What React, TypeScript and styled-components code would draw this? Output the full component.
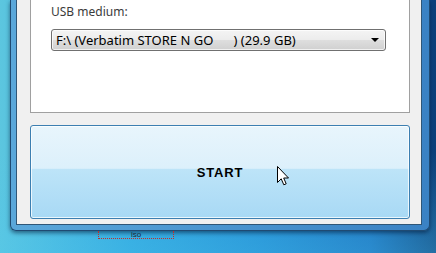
import React from 'react';
import styled, { createGlobalStyle } from 'styled-components';

const GlobalStyle = createGlobalStyle`
  html, body {
    margin: 0;
    padding: 0;
    overflow: hidden;
  }
  * {
    box-sizing: border-box;
  }
`;

const Desktop = styled.div`
  position: relative;
  width: 436px;
  height: 253px;
  overflow: hidden;
  padding-left: 10px;
  display: flex;
  flex-direction: column;
  background:
    linear-gradient(180deg, rgba(255, 255, 255, 0) 60%, rgba(80, 200, 240, 0.35) 100%),
    linear-gradient(90deg, #5cc6df 0%, #2fa6de 30%, #1f8ad2 60%, #176cbc 85%, #0c3f7a 100%);
  font-family: "Segoe UI", "Noto Sans", "Liberation Sans", sans-serif;
`;

const Window = styled.div`
  width: 420px;
  height: 231px;
  flex: none;
  display: flex;
  padding: 0 7px 5px 5px;
  background: linear-gradient(90deg, #5aa7da 0%, #4a94cf 50%, #3a82c4 100%);
  border: 1px solid #1f4a72;
  border-top: none;
  border-radius: 0 0 6px 6px;
  box-shadow: 0 2px 4px rgba(0, 20, 50, 0.55);
`;

const Client = styled.div`
  flex: 1;
  display: flex;
  flex-direction: column;
  background: #f0f0f0;
  border: 1px solid #2f5677;
  border-top: none;
  padding: 0 11px 5px 13px;
`;

const Panel = styled.div`
  height: 113px;
  background: #ffffff;
  border: 1px solid #a0a0a0;
  border-top: none;
  padding: 4px 23px 0 20px;
  display: flex;
  flex-direction: column;
`;

const Label = styled.div`
  font-size: 12px;
  line-height: 16px;
  color: #3b3b3b;
`;

const Combo = styled.div`
  margin-top: 9px;
  height: 22px;
  display: flex;
  align-items: center;
  padding: 0 6px 0 4px;
  border: 1px solid #707070;
  border-radius: 3px;
  background: linear-gradient(180deg, #f4f4f4 0%, #ececec 48%, #dedede 52%, #d0d0d0 100%);
  box-shadow: inset 0 0 0 1px rgba(255, 255, 255, 0.7);
`;

const ComboText = styled.span`
  flex: 1;
  font-size: 13px;
  color: #000;
  white-space: pre;
`;

const Arrow = styled.span`
  width: 0;
  height: 0;
  border-left: 4px solid transparent;
  border-right: 4px solid transparent;
  border-top: 4px solid #000;
`;

const StartButton = styled.div`
  margin-top: 12px;
  height: 94px;
  display: flex;
  align-items: center;
  justify-content: center;
  border: 1px solid #3c7fb1;
  border-radius: 3px;
  background: linear-gradient(180deg, #e8f5fc 0%, #dcf0fb 46%, #bde4f8 47%, #a8d9f5 100%);
  box-shadow: inset 0 0 0 1px rgba(255, 255, 255, 0.75);
  font-family: "Liberation Sans", Arial, sans-serif;
  font-weight: bold;
  font-size: 13px;
  letter-spacing: 0.8px;
  color: #000;
`;

const IconLabel = styled.div`
  margin-left: 88px;
  width: 76px;
  height: 8px;
  border: 1px dotted #c0302a;
  border-top: none;
  display: flex;
  justify-content: center;
  align-items: flex-end;
  font-family: "Liberation Sans", Arial, sans-serif;
  font-size: 8px;
  line-height: 7px;
  color: #1a2a3a;
`;

const Cursor = styled.svg`
  position: absolute;
  left: 276px;
  top: 165px;
`;

export default function App() {
  return (
    <>
      <GlobalStyle />
      <Desktop>
        <Window>
          <Client>
            <Panel>
              <Label>USB medium:</Label>
              <Combo>
                <ComboText>{'F:\\ (Verbatim STORE N GO      ) (29.9 GB)'}</ComboText>
                <Arrow />
              </Combo>
            </Panel>
            <StartButton>START</StartButton>
          </Client>
        </Window>
        <IconLabel>iso</IconLabel>
        <Cursor width="14" height="22" viewBox="0 0 14 22">
          <path
            d="M1.5 1.5 L1.5 17.5 L5.2 13.8 L7.8 19.8 L10.2 18.8 L7.7 13 L12.5 13 Z"
            fill="#fff"
            stroke="#000"
            strokeWidth="1"
            strokeLinejoin="miter"
          />
        </Cursor>
      </Desktop>
    </>
  );
}
